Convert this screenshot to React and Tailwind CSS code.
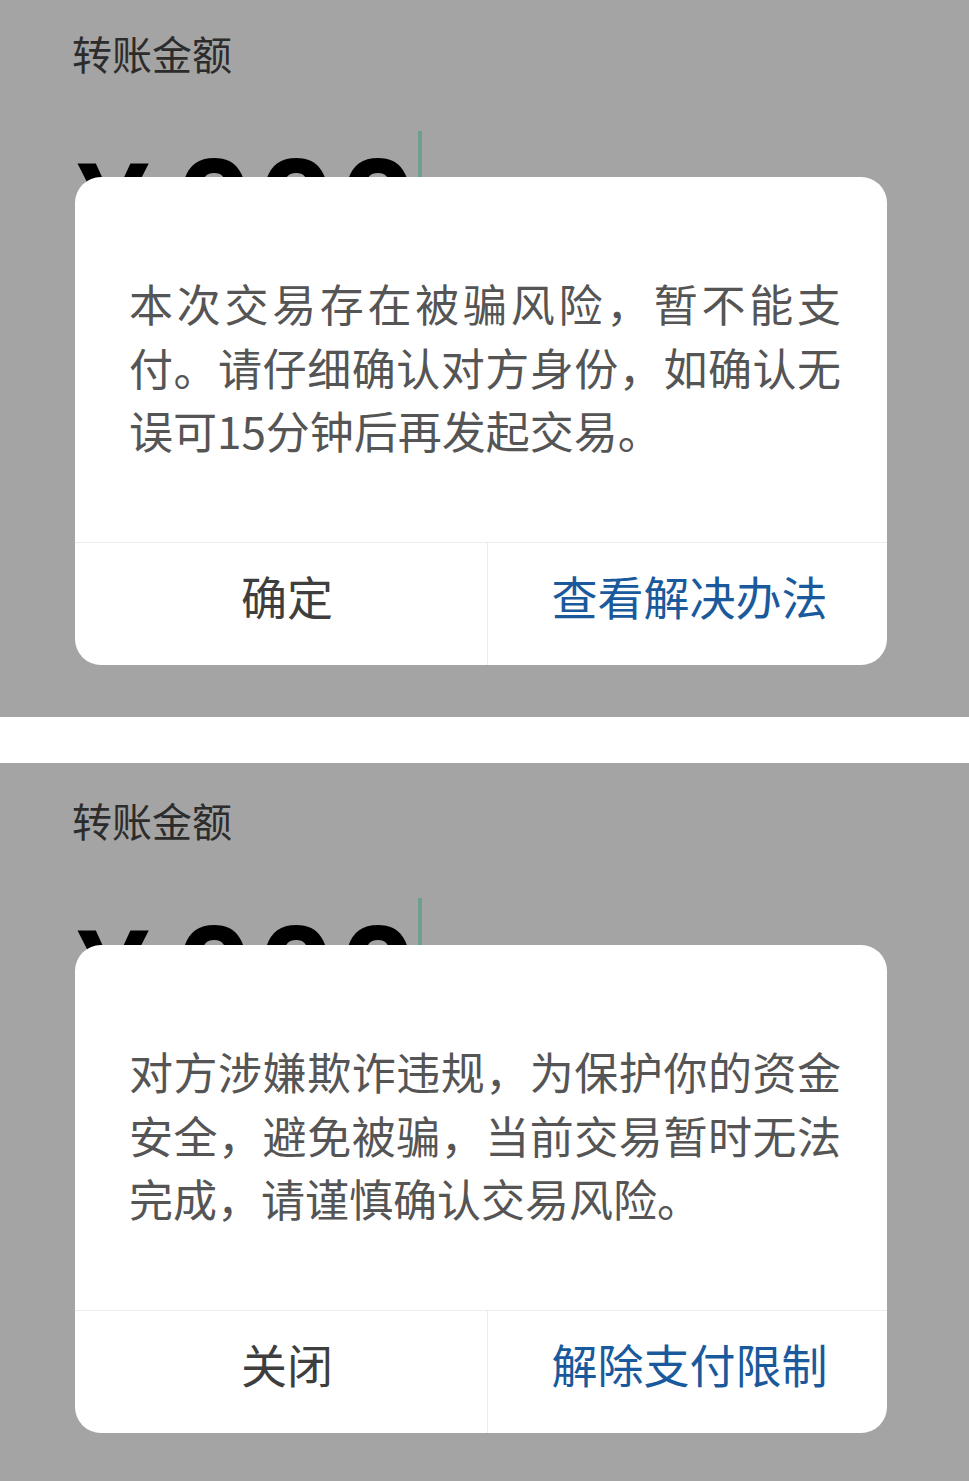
import React from "react";

const FONT = "font-['Noto_Sans_CJK_SC','Noto_Sans',sans-serif]";

function Panel({ heightClass, padClass, dialogTopClass, message, leftLabel, rightLabel }) {
  return (
    <div className={`relative ${heightClass} bg-[#a4a4a4] overflow-hidden`}>
      <div className={padClass}>
        <div className="pl-[72px] pt-[29px] text-[40px] leading-[48px] text-[#2c2c2c]">转账金额</div>
        <div className="mt-[54px] flex items-start pl-[77px]">
          <span className="font-['Liberation_Sans',sans-serif] font-bold text-[130px] leading-[140px] text-black mt-[7px]">¥</span>
          <span className="ml-[26px] font-['Liberation_Sans',sans-serif] font-bold text-[140px] leading-[140px] tracking-[4px] text-black mt-[7px]">000</span>
          <span className="ml-[-3px] w-[4px] h-[120px] bg-[#6fa08b]"></span>
        </div>
      </div>
      <div className={`absolute left-[75px] ${dialogTopClass} w-[812px] rounded-[26px] bg-white overflow-hidden`}>
        <div className="pl-[54px] pr-[46px] pt-[95px] pb-[79px]">
          <p className="text-[44px] leading-[63.5px] text-[#555555] text-justify [text-justify:inter-character]">{message}</p>
        </div>
        <div className="flex border-t border-[#ececec] h-[123px]">
          <div className="w-[413px] flex items-center justify-center pl-[12px] pb-[16px] text-[46px] text-[#3e3e3e] border-r border-[#ececec]">
            {leftLabel}
          </div>
          <div className="flex-1 flex items-center justify-center pl-[4px] pb-[16px] text-[46px] text-[#1a5a9c]">
            {rightLabel}
          </div>
        </div>
      </div>
    </div>
  );
}

export default function App() {
  return (
    <div className={`w-[969px] bg-white ${FONT}`}>
      <Panel
        heightClass="h-[717px]"
        padClass="pt-0"
        dialogTopClass="top-[177px]"
        message="本次交易存在被骗风险，暂不能支付。请仔细确认对方身份，如确认无误可15分钟后再发起交易。"
        leftLabel="确定"
        rightLabel="查看解决办法"
      />
      <div className="h-[46px] bg-white"></div>
      <Panel
        heightClass="h-[718px]"
        padClass="pt-[4px]"
        dialogTopClass="top-[182px]"
        message="对方涉嫌欺诈违规，为保护你的资金安全，避免被骗，当前交易暂时无法完成，请谨慎确认交易风险。"
        leftLabel="关闭"
        rightLabel="解除支付限制"
      />
    </div>
  );
}
